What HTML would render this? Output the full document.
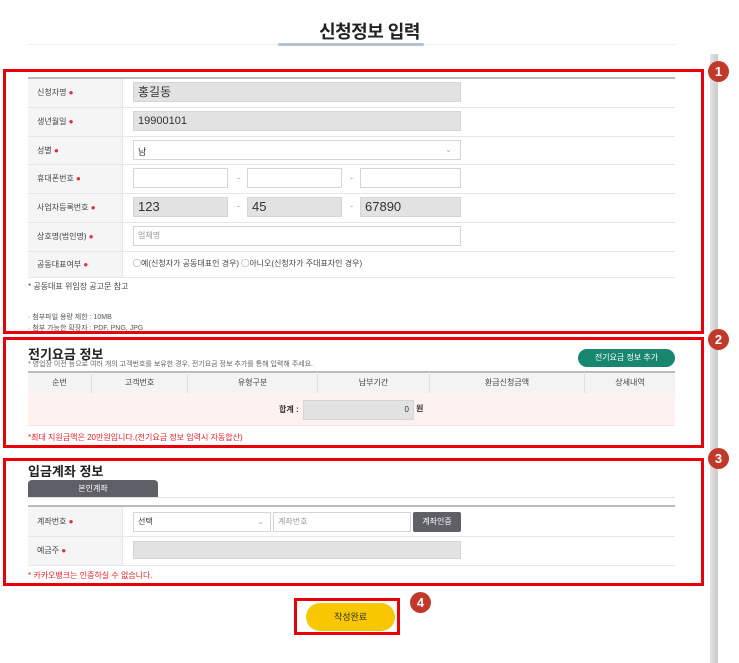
<!DOCTYPE html>
<html><head><meta charset="utf-8"><style>
*{box-sizing:border-box;margin:0;padding:0}
body{width:739px;height:663px;background:#fff;position:relative;overflow:hidden;font-family:"Liberation Sans","Noto Sans CJK KR",sans-serif;color:#333}
.a{position:absolute}
.box{position:absolute;border:3px solid #e8000b}
.badge{position:absolute;width:21px;height:21px;border-radius:50%;background:#c0392b;color:#fff;font-size:13px;font-weight:bold;text-align:center;line-height:21px}
.lbl{position:absolute;left:28px;width:94px;background:#f5f5f5;font-size:8px;padding-left:9px;color:#444}
.lbl b{color:#e03040;font-size:8px}
.row{position:absolute;left:28px;width:647px;border-bottom:1px solid #e6e6e6}
.inp{position:absolute;height:20px;border:1px solid #d5d5d5;background:#fff;font-size:11px;padding-left:4px;line-height:18px}
.g{background:#e2e2e2}
.dash{position:absolute;font-size:9px;color:#999}
.th{position:absolute;top:372px;height:21px;font-size:8px;color:#444;text-align:center;line-height:21px;border-right:1px solid #e0e0e0}
</style></head><body>
<div class="a" style="left:0;width:739px;top:18px;text-align:center;font-size:18px;font-weight:bold;color:#222;letter-spacing:-0.5px">신청정보 입력</div>
<div class="a" style="left:28px;width:647px;top:44px;height:1px;background:#eee"></div>
<div class="a" style="left:278px;width:146px;top:43px;height:3px;background:#b8c2cc;border-radius:2px"></div>
<div class="a" style="left:710px;top:54px;width:8px;height:609px;background:linear-gradient(90deg,#e4e4e6,#c9c9cd)"></div>

<!-- box 1 -->
<div class="box" style="left:3px;top:69px;width:701px;height:265px"></div>
<div class="badge" style="left:708px;top:61px">1</div>
<div class="a" style="left:28px;top:77px;width:647px;height:2px;background:#bbb"></div>
<div class="a" style="left:122px;top:79px;width:1px;height:198px;background:#e6e6e6"></div>
<div class="lbl" style="top:79px;height:28px;line-height:28px">신청자명 <b>●</b></div>
<div class="lbl" style="top:108px;height:28px;line-height:28px">생년월일 <b>●</b></div>
<div class="lbl" style="top:137px;height:27px;line-height:27px">성별 <b>●</b></div>
<div class="lbl" style="top:165px;height:28px;line-height:28px">휴대폰번호 <b>●</b></div>
<div class="lbl" style="top:194px;height:28px;line-height:28px">사업자등록번호 <b>●</b></div>
<div class="lbl" style="top:223px;height:28px;line-height:28px">상호명(법인명) <b>●</b></div>
<div class="lbl" style="top:252px;height:25px;line-height:25px">공동대표여부 <b>●</b></div>
<div class="row" style="top:107px"></div><div class="row" style="top:136px"></div><div class="row" style="top:164px"></div><div class="row" style="top:193px"></div><div class="row" style="top:222px"></div><div class="row" style="top:251px"></div><div class="row" style="top:277px"></div>
<div class="inp g" style="left:133px;top:82px;width:328px;font-size:12px">홍길동</div>
<div class="inp g" style="left:133px;top:111px;width:328px">19900101</div>
<div class="inp" style="left:133px;top:140px;width:328px;font-size:9px;padding-top:2px">남<span style="position:absolute;right:8px;top:0;color:#aaa;font-size:8px">⌄</span></div>
<div class="inp" style="left:133px;top:168px;width:95px"></div><div class="dash" style="left:237px;top:173px">-</div>
<div class="inp" style="left:247px;top:168px;width:95px"></div><div class="dash" style="left:350px;top:173px">-</div>
<div class="inp" style="left:360px;top:168px;width:101px"></div>
<div class="inp g" style="left:133px;top:197px;width:95px;font-size:13px">123</div><div class="dash" style="left:237px;top:201px">-</div>
<div class="inp g" style="left:247px;top:197px;width:95px;font-size:13px">45</div><div class="dash" style="left:350px;top:201px">-</div>
<div class="inp g" style="left:360px;top:197px;width:101px;font-size:13px">67890</div>
<div class="inp" style="left:133px;top:226px;width:328px;font-size:8px;color:#999">업체명</div>
<div class="a" style="left:133px;top:258px;font-size:8px;color:#444">◯예(신청자가 공동대표인 경우) ◯아니오(신청자가 주대표자인 경우)</div>
<div class="a" style="left:28px;top:281px;font-size:8px;color:#444">* 공동대표 위임장 공고문 참고</div>
<div class="a" style="left:28px;top:312px;font-size:7px;color:#555">· 첨부파일 용량 제한 : 10MB</div>
<div class="a" style="left:28px;top:323px;font-size:7px;color:#555">· 첨부 가능한 확장자 : PDF, PNG, JPG</div>

<!-- box 2 -->
<div class="box" style="left:3px;top:337px;width:701px;height:111px"></div>
<div class="badge" style="left:708px;top:329px">2</div>
<div class="a" style="left:28px;top:344px;font-size:13px;font-weight:bold;color:#222">전기요금 정보</div>
<div class="a" style="left:28px;top:359px;font-size:7px;color:#666">* 영업장 이전 등으로 여러 개의 고객번호를 보유한 경우, 전기요금 정보 추가를 통해 입력해 주세요.</div>
<div class="a" style="left:578px;top:349px;width:97px;height:18px;border-radius:9px;background:#17876f;color:#fff;font-size:8px;text-align:center;line-height:18px">전기요금 정보 추가</div>
<div class="a" style="left:28px;top:371px;width:647px;height:22px;background:#f3f3f3;border-top:2px solid #bbb"></div>
<div class="th" style="left:28px;width:64px">순번</div>
<div class="th" style="left:92px;width:96px">고객번호</div>
<div class="th" style="left:188px;width:130px">유형구분</div>
<div class="th" style="left:318px;width:112px">납부기간</div>
<div class="th" style="left:430px;width:155px">환급신청금액</div>
<div class="th" style="left:585px;width:90px;border:none">상세내역</div>
<div class="a" style="left:28px;top:393px;width:647px;height:33px;background:#fdf2f0;border-bottom:1px solid #e6e6e6"></div>
<div class="a" style="left:279px;top:404px;font-size:8px;font-weight:bold;color:#333">합계 :</div>
<div class="inp g" style="left:303px;top:400px;width:111px;text-align:right;padding-right:4px;font-size:8px">0</div>
<div class="a" style="left:416px;top:403px;font-size:8px;font-weight:bold">원</div>
<div class="a" style="left:28px;top:432px;font-size:8px;color:#e0202a">*최대 지원금액은 20만원입니다.(전기요금 정보 입력시 자동합산)</div>

<!-- box 3 -->
<div class="box" style="left:3px;top:458px;width:701px;height:128px"></div>
<div class="badge" style="left:708px;top:448px">3</div>
<div class="a" style="left:28px;top:461px;font-size:13px;font-weight:bold;color:#222">입금계좌 정보</div>
<div class="a" style="left:28px;top:480px;width:130px;height:18px;background:#5f5f67;border-radius:4px 4px 0 0;color:#fff;font-size:8px;text-align:center;line-height:18px">본인계좌</div>
<div class="a" style="left:28px;top:497px;width:647px;height:1px;background:#e2e2e2"></div>
<div class="a" style="left:28px;top:505px;width:647px;height:2px;background:#bbb"></div>
<div class="a" style="left:122px;top:507px;width:1px;height:58px;background:#e6e6e6"></div>
<div class="lbl" style="top:507px;height:29px;line-height:29px">계좌번호 <b>●</b></div>
<div class="lbl" style="top:537px;height:28px;line-height:28px">예금주 <b>●</b></div>
<div class="row" style="top:536px"></div><div class="row" style="top:565px"></div>
<div class="inp" style="left:133px;top:512px;width:138px;font-size:8px">선택<span style="position:absolute;right:6px;top:0;color:#aaa">⌄</span></div>
<div class="inp" style="left:273px;top:512px;width:138px;font-size:8px;color:#999">계좌번호</div>
<div class="a" style="left:413px;top:512px;width:48px;height:20px;background:#5f5f67;color:#fff;font-size:8px;text-align:center;line-height:20px;border-radius:2px">계좌인증</div>
<div class="inp g" style="left:133px;top:541px;width:328px;height:18px"></div>
<div class="a" style="left:28px;top:570px;font-size:8px;color:#e0202a">* 카카오뱅크는 인증하실 수 없습니다.</div>

<!-- button -->
<div class="a" style="left:306px;top:603px;width:89px;height:28px;border-radius:14px;background:#f9c700;font-size:9px;color:#333;text-align:center;line-height:28px">작성완료</div>
<div class="box" style="left:294px;top:598px;width:106px;height:37px"></div>
<div class="badge" style="left:410px;top:592px">4</div>
</body></html>
